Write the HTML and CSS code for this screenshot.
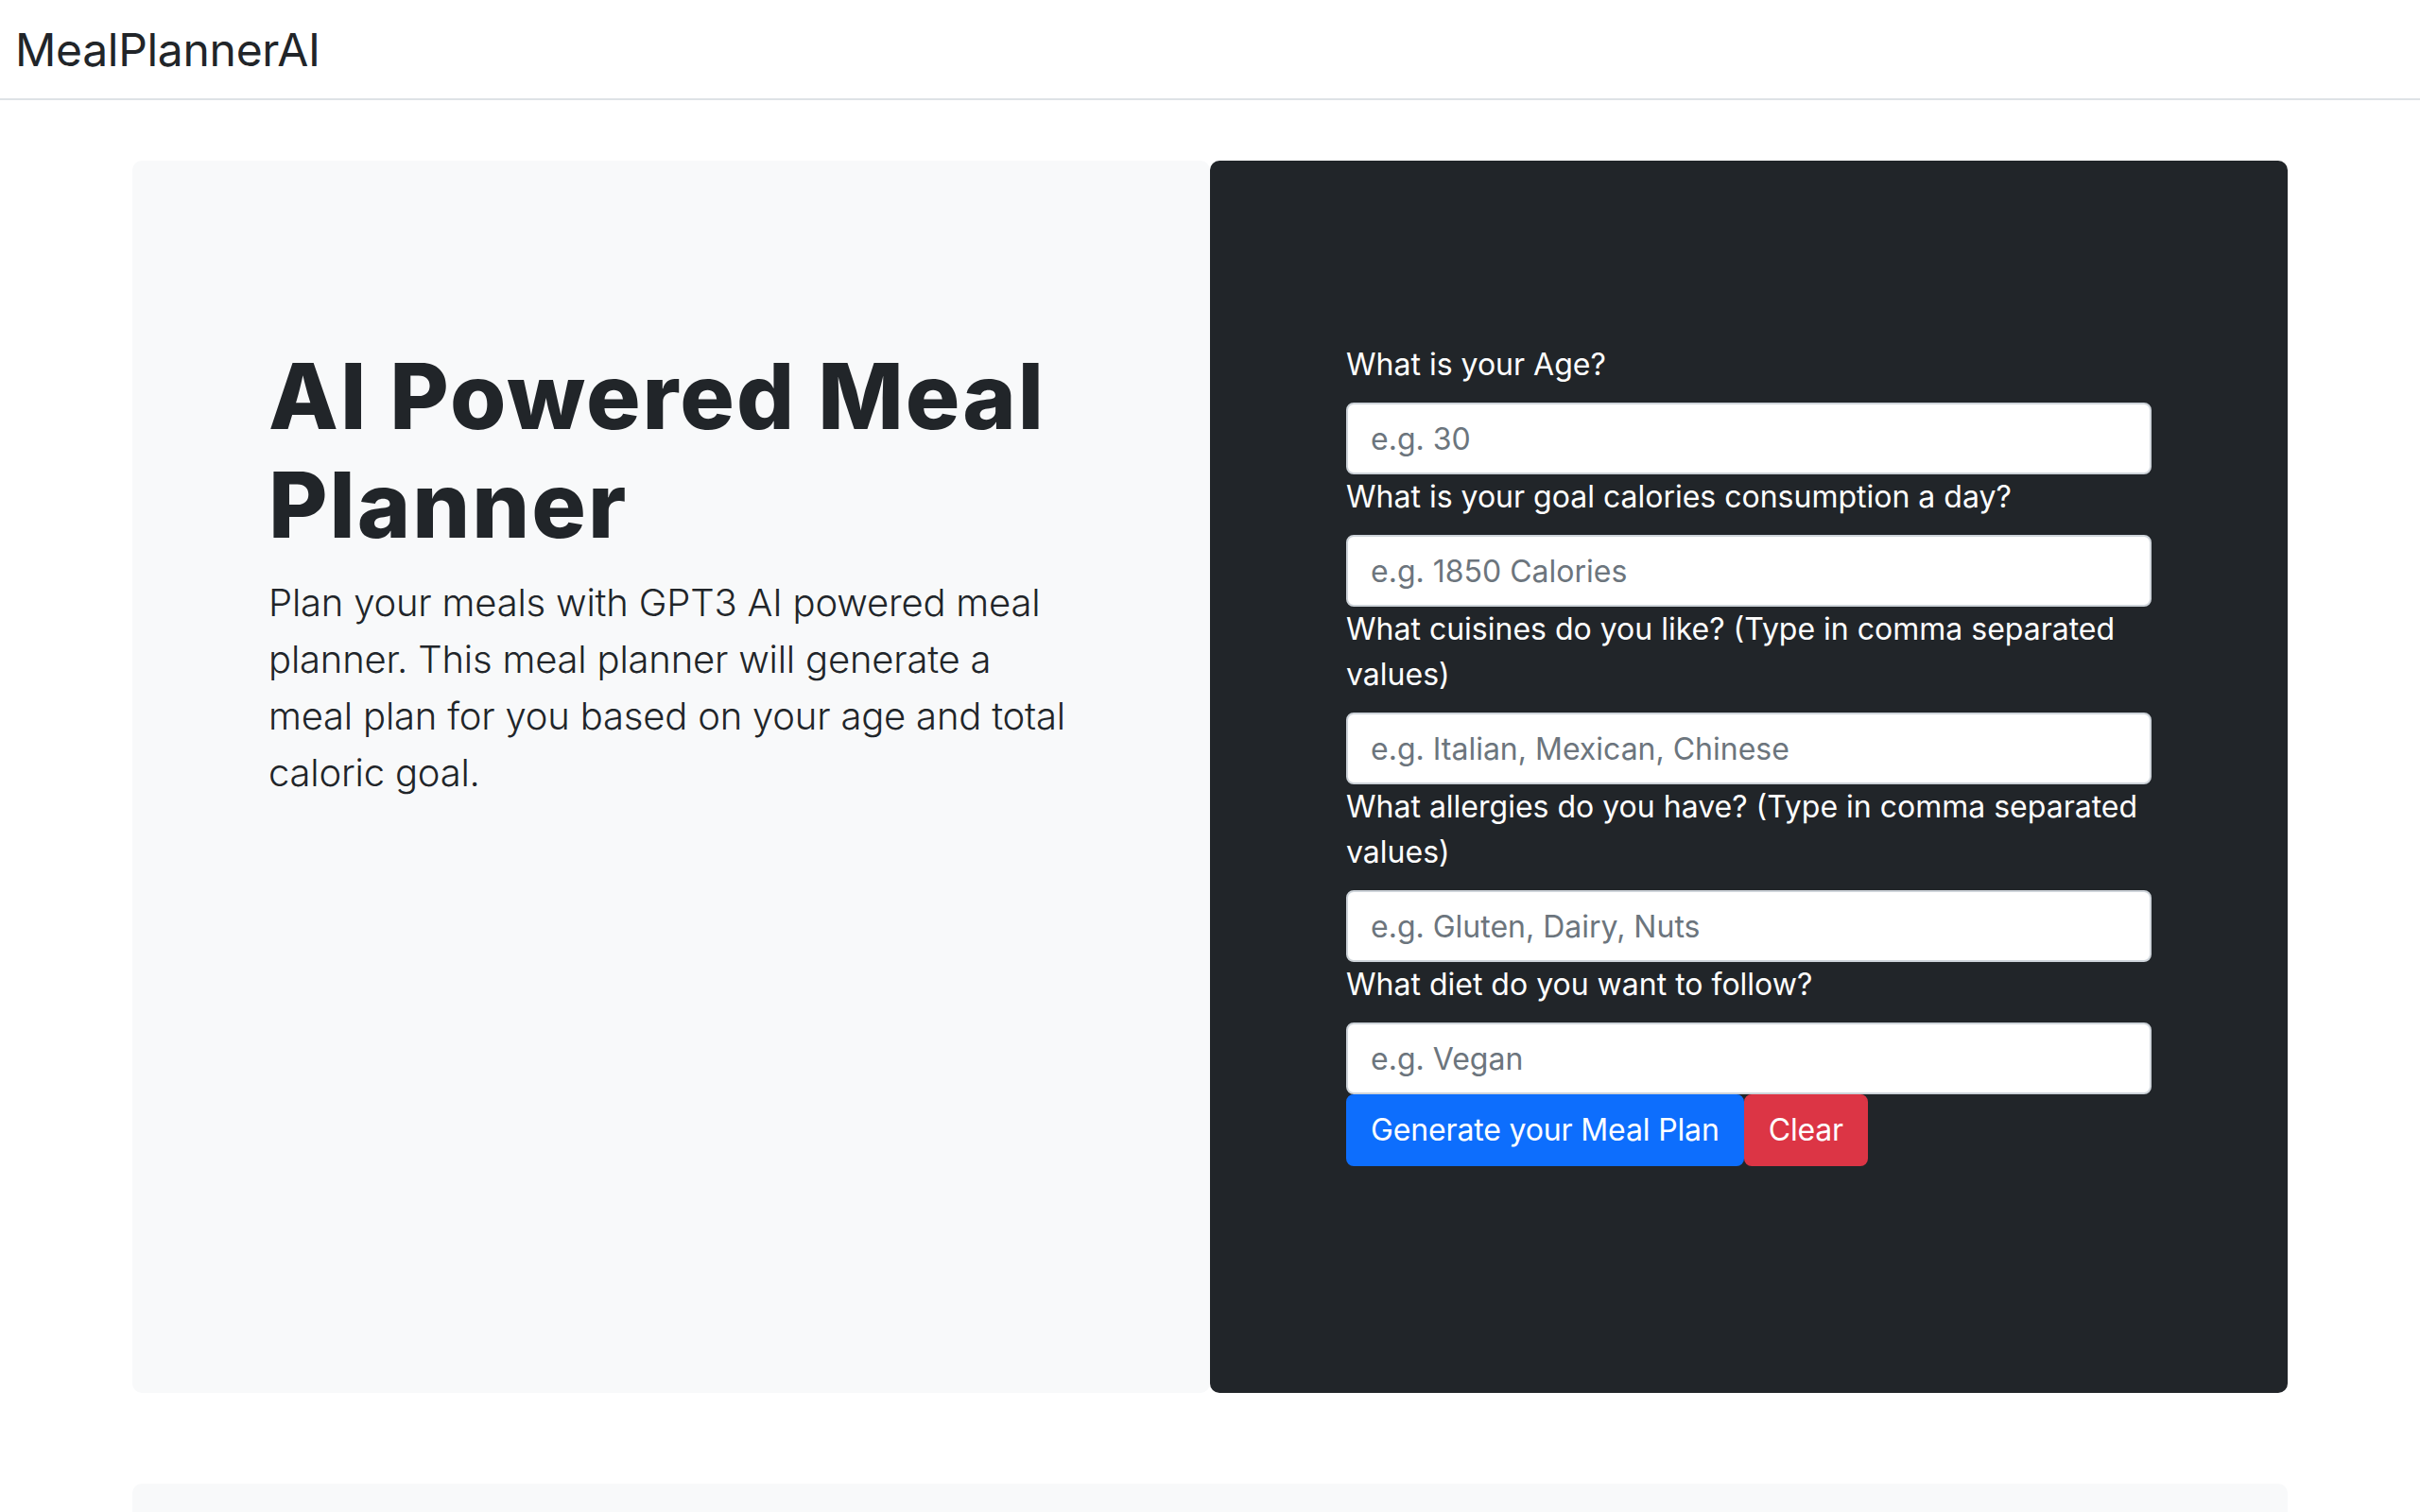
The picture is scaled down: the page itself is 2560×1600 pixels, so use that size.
FILE: index.html
```html
<!DOCTYPE html>
<html lang="en">
<head>
  <meta charset="UTF-8">
  <meta name="viewport" content="width=device-width, initial-scale=1.0">
  <title>MealPlannerAI</title>
  <link rel="stylesheet" href="styles.css">
</head>
<body>
  <nav class="navbar">
    <a class="brand" href="#">MealPlannerAI</a>
  </nav>

  <main class="container">
    <div class="hero">
      <div class="hero-intro">
        <h1>AI Powered Meal Planner</h1>
        <p class="lead">Plan your meals with GPT3 AI powered meal planner. This meal planner will generate a meal plan for you based on your age and total caloric goal.</p>
      </div>

      <div class="hero-form">
        <form id="mealForm" onsubmit="return false;">
          <label for="age">What is your Age?</label>
          <input type="text" id="age" placeholder="e.g. 30">

          <label for="calories">What is your goal calories consumption a day?</label>
          <input type="text" id="calories" placeholder="e.g. 1850 Calories">

          <label for="cuisines">What cuisines do you like? (Type in comma separated values)</label>
          <input type="text" id="cuisines" placeholder="e.g. Italian, Mexican, Chinese">

          <label for="allergies">What allergies do you have? (Type in comma separated values)</label>
          <input type="text" id="allergies" placeholder="e.g. Gluten, Dairy, Nuts">

          <label for="diet">What diet do you want to follow?</label>
          <input type="text" id="diet" placeholder="e.g. Vegan">

          <div class="actions">
            <button type="submit" class="btn btn-primary">Generate your Meal Plan</button>
            <button type="reset" class="btn btn-danger">Clear</button>
          </div>
        </form>
      </div>
    </div>

    <div class="result">
      <!-- Generated meal plan goes here -->
    </div>
  </main>
</body>
</html>
```

FILE: styles.css
```css
body {
  margin: 0;
  font-family: "Inter", "Noto Sans", sans-serif;
  color: #212529;
  background-color: #fff;
}

.navbar {
  height: 104px;
  display: flex;
  align-items: center;
  padding-left: 16px;
  border-bottom: 2px solid #dee2e6;
}

.brand {
  font-size: 48px;
  letter-spacing: -0.3px;
  color: #212529;
  text-decoration: none;
}

.container {
  width: 2280px;
  margin: 64px auto 0;
}

.hero {
  display: flex;
}

.hero-intro,
.hero-form {
  flex: 1;
  box-sizing: border-box;
  padding: 192px 144px 240px;
  border-radius: 10px;
}

.hero-intro {
  background-color: #f8f9fa;
}

.hero-form {
  background-color: #212529;
  color: #fff;
}

h1 {
  margin: 0 0 16px;
  font-size: 96px;
  font-weight: 800;
  letter-spacing: 2px;
  line-height: 1.2;
}

.lead {
  margin: 0;
  font-size: 40px;
  font-weight: 300;
  letter-spacing: -0.2px;
  line-height: 1.5;
}

form label {
  display: block;
  font-size: 32px;
  line-height: 1.5;
  margin-bottom: 16px;
}

form input {
  display: block;
  width: 100%;
  box-sizing: border-box;
  height: 76px;
  padding: 12px 24px;
  font-family: inherit;
  font-size: 32px;
  line-height: 1.5;
  color: #212529;
  background-color: #fff;
  border: 2px solid #ced4da;
  border-radius: 8px;
}

form input::placeholder {
  color: #6c757d;
}

.actions {
  display: flex;
}

.btn {
  height: 76px;
  padding: 12px 24px;
  font-family: inherit;
  font-size: 32px;
  letter-spacing: -0.15px;
  line-height: 1.5;
  color: #fff;
  border: 2px solid transparent;
  border-radius: 8px;
  cursor: pointer;
}

.btn-primary {
  background-color: #0d6efd;
  border-color: #0d6efd;
}

.btn-danger {
  background-color: #dc3545;
  border-color: #dc3545;
}

.result {
  margin-top: 96px;
  height: 30px;
  background-color: #f8f9fa;
  border-radius: 10px 10px 0 0;
}
```
